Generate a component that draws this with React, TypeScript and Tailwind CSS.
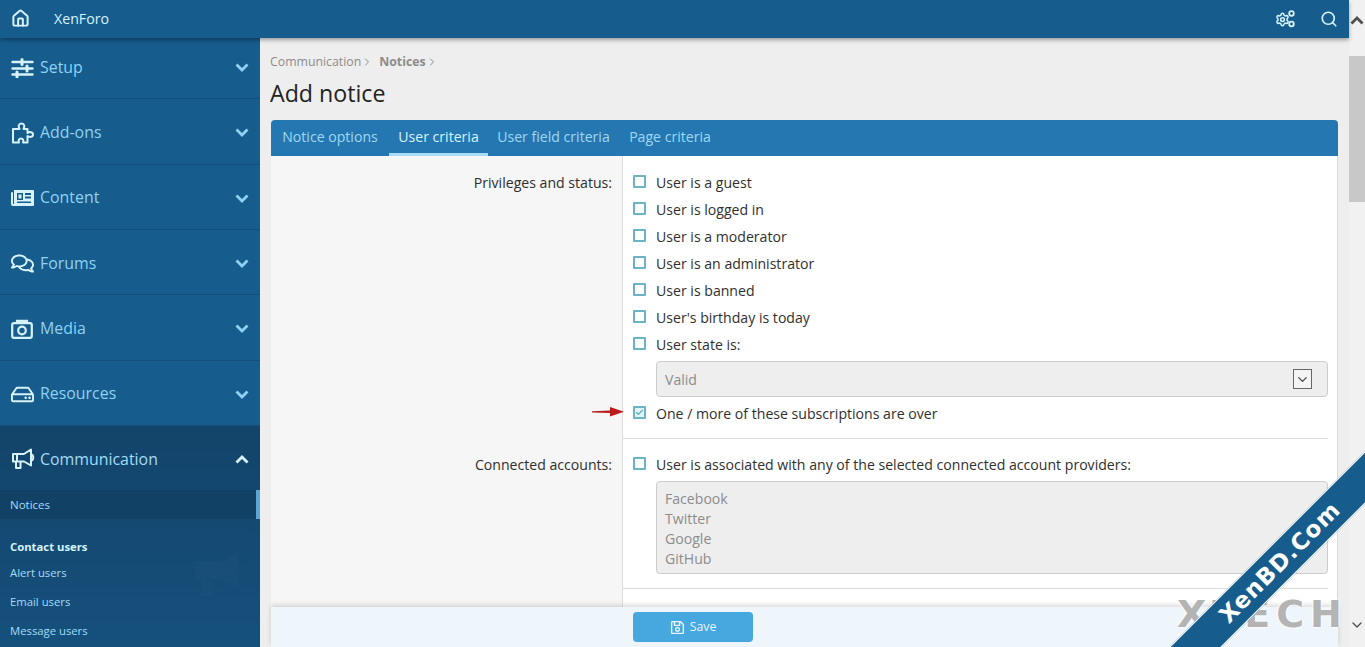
import React from "react";
import { ChevronDown, ChevronRight, Search, House, Check, Settings } from "lucide-react";
import { FaRegComments, FaRegHdd, FaRegSave } from "react-icons/fa";

const Sliders = () => (
  <svg width="23" height="20" viewBox="0 0 23 20" fill="none" stroke="currentColor" strokeWidth="2.400" strokeLinecap="round">
    <path d="M1.500 4h20M1.500 10.500h20M1.500 16.500h20" />
    <path d="M11 1.500v5M16 8v5M6 14v5" strokeWidth="3" />
  </svg>
);
const PuzzleOutline = () => (
  <svg width="24" height="22" viewBox="0 0 24 22" fill="none" stroke="currentColor" strokeWidth="2" strokeLinejoin="round">
    <path d="M2 7h6.500C7 4.500 7.500 1.500 10.500 1.500S14 4.500 12.500 7H16.500v4c2-1.500 5.500-1.200 5.500 1.500s-3.500 3-5.500 1.500v6.500h-4.500c1-2.500-.2-4-2-4s-3 1.500-2 4H2Z" />
  </svg>
);
const Paper = () => (
  <svg width="23" height="18" viewBox="0 0 23 18" fill="currentColor">
    <path fillRule="evenodd" d="M3 1h19a1 1 0 0 1 1 1v14a1 1 0 0 1-1 1H2a2 2 0 0 1-2-2V4a1 1 0 0 1 2 0v11h1V1Zm3 3v7h6V4H6Zm1.500 1.500h3v4h-3v-4ZM14 4v2h6V4h-6Zm0 3.500v2h6v-2h-6Zm-8 5v1.500h14v-1.500H6Z" />
  </svg>
);
const CameraOutline = () => (
  <svg width="22" height="20" viewBox="0 0 22 20" fill="none" stroke="currentColor" strokeWidth="2.200">
    <rect x="1.200" y="4.200" width="19.600" height="14.600" rx="1.800" />
    <path d="M6 4V1.800h10V4" />
    <circle cx="11" cy="11.500" r="3.800" />
  </svg>
);
const Bullhorn = () => (
  <svg width="24" height="22" viewBox="0 0 24 22" fill="none" stroke="currentColor" strokeWidth="2" strokeLinejoin="round">
    <path d="M20 1.500v16L13 13.500H2V6h11Z" />
    <path d="M20 6.500c3 0 3 6 0 6" />
    <path d="M5 14v6h4.500v-6" />
    <path d="M6 6v7.500" />
  </svg>
);
const Cogs = () => (
  <div className="relative h-[18px] w-[20px]">
    <Settings size={15} strokeWidth={2.400} className="absolute left-0 top-[2px]" />
    <svg className="absolute right-0 top-0" width="7" height="18" viewBox="0 0 7 18" fill="none" stroke="currentColor" strokeWidth="1.800">
      <circle cx="3.500" cy="3.500" r="2.300" />
      <circle cx="3.500" cy="14" r="2.300" />
    </svg>
  </div>
);
const Chev = ({ up, className }: { up?: boolean; className: string }) => (
  <svg width="14" height="9" viewBox="0 0 14 9" fill="none" stroke="currentColor" strokeWidth="2.800" className={className}>
    <path d={up ? "M1.500 7.500 7 2l5.500 5.500" : "M1.500 1.500 7 7l5.500-5.500"} />
  </svg>
);

const NAV: [string, React.ReactNode][] = [
  ["Setup", <Sliders />],
  ["Add-ons", <PuzzleOutline />],
  ["Content", <Paper />],
  ["Forums", <FaRegComments size={23} />],
  ["Media", <CameraOutline />],
  ["Resources", <FaRegHdd size={23} />],
];

const Box = ({ checked }: { checked?: boolean }) => (
  <span className={`-mt-[3px] flex h-[13px] w-[13px] shrink-0 items-center justify-center rounded-[1px] border-2 border-[#6db3c4] ${checked ? "bg-[#e4f3f8]" : "bg-white"}`}>
    {checked && <Check size={11} strokeWidth={3} className="text-[#57a8bd]" />}
  </span>
);

const Opt = ({ label, checked }: { label: string; checked?: boolean }) => (
  <div className="flex h-[27px] items-center gap-[10px]">
    <Box checked={checked} />
    <span className="text-[14.100px] text-[#2f2f2f]">{label}</span>
  </div>
);

export default function App() {
  return (
    <div className="relative flex h-[647px] w-full overflow-hidden bg-[#eeeeee] font-['Open_Sans',sans-serif]">
      <div className="flex min-w-0 flex-1 flex-col">
        <header className="relative z-10 flex h-[38px] shrink-0 items-center justify-between bg-[#165c8c] pl-[11px] pr-[11px] text-[#d6f3fc] shadow-[0_2px_4px_rgba(0,0,0,0.35)]">
          <div className="flex items-center">
            <House size={19} strokeWidth={2.500} />
            <span className="ml-[24px] text-[14.200px]">XenForo</span>
          </div>
          <div className="flex items-center gap-[25px]">
            <Cogs />
            <Search size={18} strokeWidth={2.200} />
          </div>
        </header>
        <div className="flex min-h-0 flex-1">
          <aside className="relative -mt-[4px] flex w-[260px] shrink-0 flex-col overflow-hidden bg-[#165c8c]">
            {NAV.map(([name, icon]) => (
              <div key={name} className="flex h-[65.330px] shrink-0 items-center border-b border-[#124f7b] pl-[11px] pr-[11px] pt-[3px]">
                <span className="flex w-[29px] justify-start text-[#d6f3fc]">{icon}</span>
                <span className="flex-1 text-[15.900px] text-[#8fd2f5]">{name}</span>
                <Chev className="text-[#8fd2f5]" />
              </div>
            ))}
            <div className="flex flex-1 flex-col bg-linear-to-b from-[#13446a] to-[#15507c]">
              <div className="flex h-[64px] shrink-0 items-center pl-[11px] pr-[11px] pt-[3px]">
                <span className="w-[29px] text-[#d6f3fc]"><Bullhorn /></span>
                <span className="flex-1 text-[15.900px] text-[#a4dcf8]">Communication</span>
                <Chev up className="text-[#d6f3fc]" />
              </div>
              <div className="flex h-[29px] shrink-0 items-center justify-between bg-[#124166]">
                <span className="pl-[10px] text-[11.500px] text-[#a4dcf8]">Notices</span>
                <span className="h-full w-[4px] bg-[#5ba6d6]" />
              </div>
              <div className="mt-[18px] pl-[10px] text-[11.300px] font-bold leading-[20px] text-[#d6f3fc]">Contact users</div>
              <div className="mt-[2px] flex h-[29px] items-center pl-[10px] text-[11.300px] text-[#a4dcf8]">Alert users</div>
              <div className="flex h-[29px] items-center pl-[10px] text-[11.300px] text-[#a4dcf8]">Email users</div>
              <div className="flex h-[29px] items-center pl-[10px] text-[11.300px] text-[#a4dcf8]">Message users</div>
            </div>
            <svg className="absolute bottom-[46px] right-[12px]" width="58" height="54" viewBox="0 0 24 22" fill="#ffffff" fillOpacity="0.015"><path d="M20 1.500v16L13 13.500H2V6h11Z" /><path d="M5 14v6h4.500v-6Z" /></svg>
          </aside>
          <main className="flex min-w-0 flex-1 flex-col pl-[10px] pr-[11px]">
            <div className="flex min-h-0 flex-1 flex-col overflow-hidden">
              <div className="mt-[14px] flex h-[20px] shrink-0 items-center text-[12.300px] text-[#8c8c8c]">
                <span>Communication</span>
                <ChevronRight size={12} className="mr-[6px]" />
                <span className="font-bold">Notices</span>
                <ChevronRight size={12} />
              </div>
              <h1 className="mt-[3px] h-[36px] shrink-0 text-[23.200px] leading-[36px] text-[#222222]">Add notice</h1>
              <div className="ml-px mt-[9px] flex min-h-0 flex-1 flex-col overflow-hidden">
                <div className="flex h-[36px] shrink-0 rounded-t-[4px] bg-[#2577b1] text-[14.100px] text-[#9fd8f7]">
                  <span className="flex w-[118px] items-center justify-center pb-[2px]">Notice options</span>
                  <span className="flex w-[99px] items-center justify-center border-b-[3px] border-[#a8dcf8] pt-[1px] text-[#d6f3fc]">User criteria</span>
                  <span className="flex w-[131px] items-center justify-center pb-[2px]">User field criteria</span>
                  <span className="flex w-[102px] items-center justify-center pb-[2px]">Page criteria</span>
                </div>
                <div className="flex min-h-0 flex-1 flex-col border-r border-[#d8d8d8] bg-white">
                  <div className="flex h-[283px] shrink-0">
                    <div className="w-[352px] shrink-0 border-r border-[#dddddd] bg-[#f6f6f6] pr-[10px] pt-[13px] text-right text-[14.100px] leading-[27px] text-[#2f2f2f]">Privileges and status:</div>
                    <div className="mr-[9px] flex-1 border-b border-[#dddddd] pl-[10px] pt-[13px]">
                      <Opt label="User is a guest" />
                      <Opt label="User is logged in" />
                      <Opt label="User is a moderator" />
                      <Opt label="User is an administrator" />
                      <Opt label="User is banned" />
                      <Opt label="User's birthday is today" />
                      <Opt label="User state is:" />
                      <div className="ml-[23px] mt-[3px] flex h-[36px] items-center justify-between rounded-[4px] border border-[#cccccc] bg-[#eeeeee] pl-[8px] pr-[15px] text-[14.100px] text-[#8c8c8c]">
                        <span className="pt-[2px]">Valid</span>
                        <span className="flex h-[20px] w-[19px] items-center justify-center border border-[#666666] bg-[#f4f4f4] text-[#444444]"><ChevronDown size={15} strokeWidth={2} /></span>
                      </div>
                      <div className="relative mt-[3px]">
                        <Opt label="One / more of these subscriptions are over" checked />
                        <svg className="absolute left-[-41px] top-[6px]" width="33" height="12" viewBox="0 0 33 12"><path d="M0 5.200 18 4.500V1l14 4.800L18 10.500V7L0 6.500Z" fill="#bb1c1c" /></svg>
                      </div>
                    </div>
                  </div>
                  <div className="flex h-[150px] shrink-0">
                    <div className="w-[352px] shrink-0 border-r border-[#dddddd] bg-[#f6f6f6] pr-[10px] pt-[12px] text-right text-[14.100px] leading-[27px] text-[#2f2f2f]">Connected accounts:</div>
                    <div className="mr-[9px] flex-1 border-b border-[#dddddd] pl-[10px] pt-[12px]">
                      <Opt label="User is associated with any of the selected connected account providers:" />
                      <div className="ml-[23px] mt-[3px] h-[93px] rounded-[4px] border border-[#cccccc] bg-[#eeeeee] py-[7px] pl-[8px] text-[14.100px] leading-[20px] text-[#8c8c8c]">
                        <div>Facebook</div>
                        <div>Twitter</div>
                        <div>Google</div>
                        <div>GitHub</div>
                      </div>
                    </div>
                  </div>
                  <div className="flex flex-1">
                    <div className="w-[352px] shrink-0 border-r border-[#dddddd] bg-[#f6f6f6]" />
                    <div className="flex-1" />
                  </div>
                </div>
              </div>
            </div>
            <div className="z-10 ml-px flex h-[40px] shrink-0 items-center bg-[#eef6fc] pl-[362px] shadow-[0_-2px_5px_rgba(0,0,0,0.15)]">
              <button className="flex h-[30px] w-[120px] items-center justify-center gap-[5px] rounded-[4px] bg-[#47a7df] text-[12.300px] text-[#e6f5fd]">
                <FaRegSave size={15} />
                Save
              </button>
            </div>
          </main>
        </div>
      </div>
      <div className="flex w-[16px] shrink-0 flex-col bg-[#f1f1f1]">
        <div className="flex h-[56px] items-start justify-center pt-[16px] text-[#505050]"><Chev up className="" /></div>
        <div className="h-[146px] bg-[#c8c8c8]" />
        <div className="flex flex-1 items-end justify-center pb-[14px] text-[#505050]"><ChevronDown size={16} strokeWidth={2} /></div>
      </div>
      <div className="pointer-events-none absolute left-[1177px] top-[592px] z-20 font-['DejaVu_Sans',sans-serif] text-[38px] font-bold leading-[44px] tracking-[6px] text-[#b4b4b4] [text-shadow:0_0_3px_#ffffff,0_0_3px_#ffffff]">XTECH</div>
      <div className="pointer-events-none absolute left-[1080px] top-[544px] z-20 flex h-[37px] w-[400px] -rotate-45 items-center justify-center border-y border-white bg-[#165c8c] font-['DejaVu_Sans',sans-serif] text-[23px] font-bold tracking-[1px] text-white">XenBD.Com</div>
    </div>
  );
}
